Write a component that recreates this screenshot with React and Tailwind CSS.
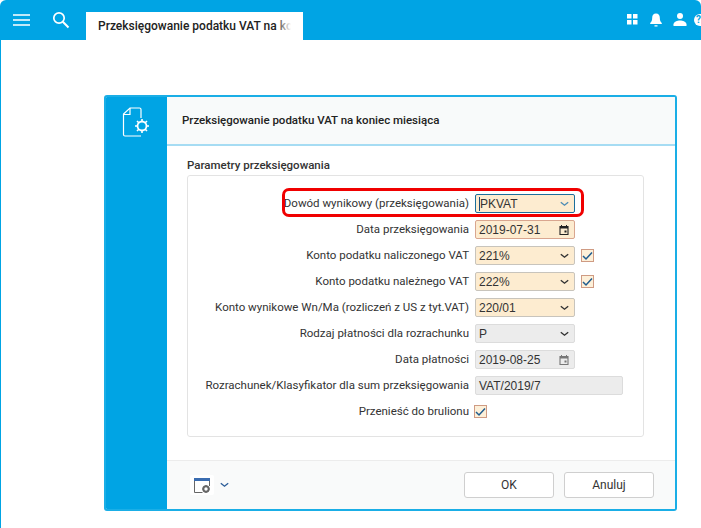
import React from "react";

const roboto = { };

function Chevron({ className = "text-[#333]" }) {
  return (
    <svg width="9" height="6" viewBox="0 0 9 6" className={className}>
      <path d="M0.8 1.2 L4.5 4.2 L8.2 1.2" fill="none" stroke="currentColor" strokeWidth="1.4" />
    </svg>
  );
}

function Cal({ color }) {
  return (
    <svg width="10" height="10" viewBox="0 0 10 10">
      <path d="M1 1.5h8v8h-8z" fill="none" stroke={color} strokeWidth="1.1" />
      <path d="M1 1h8v2.4h-8z" fill={color} />
      <path d="M2.5 0v1.5M7.5 0v1.5" stroke={color} strokeWidth="1" />
      <path d="M5.5 5.5h2v2h-2z" fill={color} />
    </svg>
  );
}

function Check() {
  return (
    <span className="flex h-[13px] w-[13px] items-center justify-center border border-[#cf9b83] bg-[#fdf0d9]">
      <svg width="11" height="10" viewBox="0 0 11 10">
        <path d="M1 5 L4 8 L10 1.5" fill="none" stroke="#1f5c8f" strokeWidth="1.5" />
      </svg>
    </span>
  );
}

function Field({ value, tone = "select", icon, width = "w-[100px]", cursor }) {
  const tones = {
    focus: "bg-[#fdecd0] border-[#1c6f9c]",
    required: "bg-[#fdecd0] border-[#d9a68f]",
    select: "bg-[#fdecd0] border-[#c8c4bc]",
    disabled: "bg-[#ececec] border-[#dcdcdc]",
  };
  return (
    <div className={`flex h-[19px] items-center justify-between rounded-[2px] border pl-[3px] pr-[5px] text-[12px] text-[#333] font-['Liberation_Sans',sans-serif] ${width} ${tones[tone]}`}>
      <span className={cursor ? "border-l border-[#1c4f7c] leading-[14px]" : "leading-[14px]"}>{value}</span>
      {icon}
    </div>
  );
}

const rows = [
  { label: "Dowód wynikowy (przeksięgowania)", value: "PKVAT", tone: "focus", cursor: true, icon: <Chevron className="text-[#4f8db5]" /> },
  { label: "Data przeksięgowania", value: "2019-07-31", tone: "required", icon: <Cal color="#222" /> },
  { label: "Konto podatku naliczonego VAT", value: "221%", tone: "select", icon: <Chevron />, check: true },
  { label: "Konto podatku należnego VAT", value: "222%", tone: "select", icon: <Chevron />, check: true },
  { label: "Konto wynikowe Wn/Ma (rozliczeń z US z tyt.VAT)", value: "220/01", tone: "select", icon: <Chevron /> },
  { label: "Rodzaj płatności dla rozrachunku", value: "P", tone: "disabled", icon: <Chevron /> },
  { label: "Data płatności", value: "2019-08-25", tone: "disabled", icon: <Cal color="#777" /> },
  { label: "Rozrachunek/Klasyfikator dla sum przeksięgowania", value: "VAT/2019/7", tone: "disabled", wide: true },
];

export default function App() {
  return (
    <div className="relative h-[528px] w-[701px] overflow-hidden bg-white font-['Roboto',sans-serif] text-[#333]">
      {/* top bar */}
      <header className="flex h-[40px] items-end rounded-t-[6px] bg-[#00a4e4]">
        <div className="flex h-[40px] w-[86px] shrink-0 items-center pb-[1px]">
          <svg width="17" height="12" viewBox="0 0 17 12" className="ml-[13px]">
            <path d="M0 1h17M0 6h17M0 11h17" stroke="#fff" strokeWidth="1.6" />
          </svg>
          <svg width="18" height="18" viewBox="0 0 18 18" className="ml-[22px]">
            <circle cx="7" cy="7" r="5.2" fill="none" stroke="#fff" strokeWidth="1.7" />
            <path d="M10.8 10.8 L16.5 16.5" stroke="#fff" strokeWidth="2" />
          </svg>
        </div>
        <div className="flex h-[28px] w-[217px] items-center whitespace-nowrap bg-white pl-[12px] text-[12px] font-medium text-[#222]">
          <span className="relative block w-[193px] overflow-hidden">
            Przeksięgowanie podatku VAT na koniec miesiąca
            <span className="absolute right-0 top-0 h-full w-[14px] bg-gradient-to-r from-white/10 to-white" />
          </span>
        </div>
        <div className="ml-auto flex h-[40px] items-center pb-[1px] pr-0">
          <svg width="11" height="11" viewBox="0 0 11 11">
            <path d="M0 0h4.5v4.5h-4.5zM6 0h4.5v4.5h-4.5zM0 6h4.5v4.5h-4.5zM6 6h4.5v4.5h-4.5z" fill="#fff" />
          </svg>
          <svg width="12" height="14" viewBox="0 0 12 14" className="ml-[12px]">
            <path d="M6 0.5c-2.6 0-3.8 1.9-3.8 4.3 0 2.6-.7 4-2 5.3v1h11.6v-1c-1.3-1.3-2-2.7-2-5.3C9.800 2.400 8.600.5 6 .5zM4.500 12.300h3v1.200h-3z" fill="#fff" />
          </svg>
          <svg width="14" height="13" viewBox="0 0 14 13" className="ml-[11px]">
            <circle cx="7" cy="3" r="3" fill="#fff" />
            <path d="M0.500 13v-1.800c0-2.200 3.800-3.700 6.500-3.700s6.500 1.500 6.500 3.700V13z" fill="#fff" />
          </svg>
          <span className="ml-[7px] flex h-[12px] w-[7px] items-center overflow-hidden rounded-l-full bg-white pl-[2px] text-[10px] font-bold leading-none text-[#00a4e4]">?</span>
        </div>
      </header>

      {/* page */}
      <main className="h-[488px] border-l border-[#00a4e4] pl-[103px] pt-[55px]">
        <section className="flex h-[416px] w-[573px] overflow-hidden rounded-[3px] border-2 border-[#1aaee6] bg-white">
          <aside className="flex w-[61px] shrink-0 justify-center bg-[#00a4e4] pt-[10px]">
            <svg width="30" height="31" viewBox="0 0 30 31" fill="none" stroke="#fff" strokeWidth="1.2">
              <path d="M19 11V2.500a1.500 1.500 0 0 0-1.500-1.500H8L1.500 7v20.500A1.500 1.500 0 0 0 3 29h16" />
              <path d="M8 1v6.500H1.500" />
              <circle cx="20" cy="19" r="4.500" strokeWidth="1.800" />
              <path d="M20 12v2.500M20 23.500V26M13 19h2.500M24.500 19H27M15 14l1.800 1.800M23.200 22.200l1.800 1.800M25 14l-1.800 1.800M16.800 22.200L15 24" strokeWidth="1.600" />
            </svg>
          </aside>
          <div className="flex min-w-0 flex-1 flex-col">
            <div className="flex h-[49px] shrink-0 items-center border-b-2 border-[#a6dcf3] bg-[#f8fafa] pl-[15px] text-[11.500px] font-medium text-[#222]">
              Przeksięgowanie podatku VAT na koniec miesiąca
            </div>
            <div className="flex-1 pl-[20px] pt-[12px]">
              <h2 className="text-[11.500px] font-medium leading-[14px] text-[#333]">Parametry przeksięgowania</h2>
              <div className="mt-[3px] flex h-[262px] w-[457px] flex-col rounded-[3px] border border-[#e3e3e3] pt-[18px]">
                {rows.map((r) => (
                  <div key={r.label} className="mb-[7px] flex h-[19px] items-center">
                    <label className="w-[281px] shrink-0 whitespace-nowrap text-right text-[11.500px] text-[#333]">{r.label}</label>
                    <div className="ml-[6px] flex items-center">
                      <Field value={r.value} tone={r.tone} icon={r.icon} cursor={r.cursor} width={r.wide ? "w-[148px]" : "w-[100px]"} />
                      {r.check && <span className="ml-[6px]"><Check /></span>}
                    </div>
                  </div>
                ))}
                <div className="flex h-[19px] items-center">
                  <label className="w-[281px] shrink-0 text-right text-[11.500px] text-[#333]">Przenieść do brulionu</label>
                  <span className="ml-[5px]"><Check /></span>
                </div>
              </div>
            </div>
            <footer className="flex h-[49px] shrink-0 items-center border-t border-[#ececec] bg-[#f9fafa] pl-[23px]">
              <span className="flex h-[20px] w-[24px] items-center justify-center rounded-[2px] bg-white">
                <svg width="17" height="15" viewBox="0 0 17 15">
                  <path d="M0 0h16v3h-16z" fill="#3a6cb0" />
                  <path d="M.5 3v11.500h8M15.500 3v5" stroke="#666" fill="none" />
                  <circle cx="12" cy="11" r="2.700" fill="none" stroke="#666" strokeWidth="2" />
                  <path d="M12 7v1.500M12 13.500V15M8 11h1.500M14.500 11H16" stroke="#666" strokeWidth="1.200" />
                </svg>
              </span>
              <span className="ml-[6px] flex"><Chevron className="text-[#2f5f9a]" /></span>
              <div className="ml-auto flex gap-[10px] pr-[21px]">
                <button className="h-[26px] w-[90px] rounded-[3px] border border-[#cfcfcf] bg-white text-[12px] text-[#333]">OK</button>
                <button className="h-[26px] w-[90px] rounded-[3px] border border-[#cfcfcf] bg-white text-[12px] text-[#333]">Anuluj</button>
              </div>
            </footer>
          </div>
        </section>
      </main>

      {/* highlight over the first field */}
      <div className="pointer-events-none absolute left-[282px] top-[188px] h-[29px] w-[302px] rounded-[7px] border-[3px] border-[#f00000]" />
    </div>
  );
}
